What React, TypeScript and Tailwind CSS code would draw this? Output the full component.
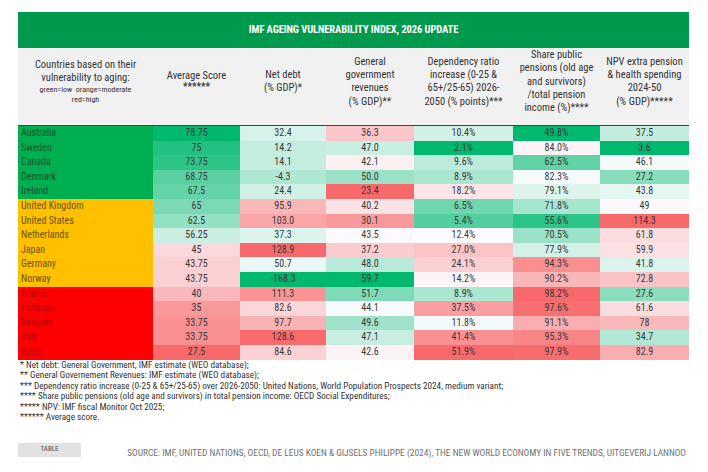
import React from 'react';

type Row = [string, 'g' | 'o' | 'r', string, string, string, string, string, string];

const rows: Row[] = [
    ['Australia', 'g', '78.75', '32.4', '36.3', '10.4%', '49.8%', '37.5'],
    ['Sweden', 'g', '75', '14.2', '47.0', '2.1%', '84.0%', '3.6'],
    ['Canada', 'g', '73.75', '14.1', '42.1', '9.6%', '62.5%', '46.1'],
    ['Denmark', 'g', '68.75', '-4.3', '50.0', '8.9%', '82.3%', '27.2'],
    ['Ireland', 'g', '67.5', '24.4', '23.4', '18.2%', '79.1%', '43.8'],
    ['United Kingdom', 'o', '65', '95.9', '40.2', '6.5%', '71.8%', '49'],
    ['United States', 'o', '62.5', '103.0', '30.1', '5.4%', '55.6%', '114.3'],
    ['Netherlands', 'o', '56.25', '37.3', '43.5', '12.4%', '70.5%', '61.8'],
    ['Japan', 'o', '45', '128.9', '37.2', '27.0%', '77.9%', '59.9'],
    ['Germany', 'o', '43.75', '50.7', '48.0', '24.1%', '94.3%', '41.8'],
    ['Norway', 'o', '43.75', '-168.3', '59.7', '14.2%', '90.2%', '72.8'],
    ['France', 'r', '40', '111.3', '51.7', '8.9%', '98.2%', '27.6'],
    ['Portugal', 'r', '35', '82.6', '44.1', '37.5%', '97.6%', '61.6'],
    ['Belgium', 'r', '33.75', '97.7', '49.6', '11.8%', '91.1%', '78'],
    ['Italy', 'r', '33.75', '128.6', '47.1', '41.4%', '95.3%', '34.7'],
    ['Spain', 'r', '27.5', '84.6', '42.6', '51.9%', '97.9%', '82.9'],
];

// true = higher value is better (green)
const higherGood = [true, false, true, false, false, false];

const WHITE = [252, 252, 255];
const GREEN = [0, 184, 110];
const RED = [248, 105, 107];

function mix(a: number[], b: number[], t: number) {
    const c = a.map((v, i) => Math.round(v + (b[i] - v) * t));
    return `rgb(${c[0]},${c[1]},${c[2]})`;
}

// excel-like 3 colour scale, midpoint at the median
function scaleColors(col: number) {
    const vals = rows.map((r) => parseFloat(r[col + 2]));
    const sorted = [...vals].sort((a, b) => a - b);
    const mid = (sorted[7] + sorted[8]) / 2;
    const min = sorted[0];
    const max = sorted[sorted.length - 1];
    const good = higherGood[col];
    return vals.map((v) => {
        if (v >= mid) {
            const t = max === mid ? 0 : (v - mid) / (max - mid);
            return mix(WHITE, good ? GREEN : RED, t);
        }
        const t = mid === min ? 0 : (mid - v) / (mid - min);
        return mix(WHITE, good ? RED : GREEN, t);
    });
}

const colors = [0, 1, 2, 3, 4, 5].map(scaleColors);

const countryStyle = {
    g: 'bg-[#00b050] text-[#10512c]',
    o: 'bg-[#ffc000] text-[#6e5200]',
    r: 'bg-[#ff0000] text-[#b40000]',
};

const grid = 'grid grid-cols-[135px_87px_86px_88px_99px_87px_89px]';

function HeadCell({ children }: { children: React.ReactNode }) {
    return (
        <div className="flex items-center justify-center pb-[12px] text-center text-[10.5px] leading-[13.3px] text-[#333]">
            <div>{children}</div>
        </div>
    );
}

export default function App() {
    return (
        <div
            className="w-[708px] h-[472px] bg-white pl-[18px] pt-[12px] text-[#333]"
            style={{ fontFamily: '"Liberation Sans Narrow", "Roboto Condensed", Roboto, sans-serif' }}
        >
            <div className="w-[671px]">
                <div className="h-[36px] bg-[#009a4e] flex items-center justify-center text-white font-bold text-[10.5px] tracking-[-0.1px]">
                    IMF AGEING VULNERABILITY INDEX, 2026 UPDATE
                </div>

                <div className={`${grid} h-[78px] bg-[#f1f1f1] border-b border-[#444]`}>
                    <HeadCell>
                        Countries based on their
                        <br />
                        vulnerability to aging:
                        <div className="text-[8px] leading-[10px]">
                            green=low&nbsp; orange=moderate
                            <br />
                            red=high
                        </div>
                    </HeadCell>
                    <HeadCell>
                        <div className="leading-[12px]">Average Score</div>
                        <div className="leading-[10px] text-[10px] font-bold">******</div>
                    </HeadCell>
                    <HeadCell>
                        Net debt
                        <br />
                        (% GDP)*
                    </HeadCell>
                    <HeadCell>
                        General
                        <br />
                        government
                        <br />
                        revenues
                        <br />
                        (% GDP)**
                    </HeadCell>
                    <HeadCell>
                        Dependency ratio
                        <br />
                        increase (0-25 &amp;
                        <br />
                        65+/25-65) 2026-
                        <br />
                        2050 (% points)***
                    </HeadCell>
                    <HeadCell>
                        Share public
                        <br />
                        pensions (old age
                        <br />
                        and survivors)
                        <br />
                        /total pension
                        <br />
                        income (%)****
                    </HeadCell>
                    <HeadCell>
                        NPV extra pension
                        <br />
                        &amp; health spending
                        <br />
                        2024-50
                        <br />
                        (% GDP)*****
                    </HeadCell>
                </div>

                <div className="flex flex-col">
                    {rows.map((r, i) => (
                        <div key={r[0]} className={`${grid} h-[14.6px] text-[10px] leading-[14.6px]`}>
                            <div className={`pl-[3px] ${countryStyle[r[1]]}`}>{r[0]}</div>
                            {[0, 1, 2, 3, 4, 5].map((c) => (
                                <div
                                    key={c}
                                    className="text-center text-[#3a3a3a]"
                                    style={{ backgroundColor: colors[c][i] }}
                                >
                                    {r[c + 2]}
                                </div>
                            ))}
                        </div>
                    ))}
                </div>
            </div>

            <div className="pl-[2px] text-[9.2px] leading-[10.5px] text-[#333]">
                <p>* Net debt: General Government, IMF estimate (WEO database);</p>
                <p>** General Governement Revenues: IMF estimate (WEO database);</p>
                <p>
                    *** Dependency ratio increase (0-25 &amp; 65+/25-65) over 2026-2050: United Nations,
                    World Population Prospects 2024, medium variant;
                </p>
                <p>**** Share public pensions (old age and survivors) in total pension income: OECD Social Expenditures;</p>
                <p>***** NPV: IMF fiscal Monitor Oct 2025;</p>
                <p>****** Average score.</p>
            </div>

            <div className="mt-[20px] flex items-end w-[668px]">
                <div className="w-[63px] h-[14px] bg-[#e2e2e2] flex items-center justify-center text-[7px] text-[#555]">
                    TABLE
                </div>
                <div className="ml-auto text-[9.4px] leading-[10px] text-[#707070] -mb-[1px]">
                    SOURCE: IMF, UNITED NATIONS, OECD, DE LEUS KOEN &amp; GIJSELS PHILIPPE (2024), THE NEW WORLD
                    ECONOMY IN FIVE TRENDS, UITGEVERIJ LANNOO
                </div>
            </div>
        </div>
    );
}
